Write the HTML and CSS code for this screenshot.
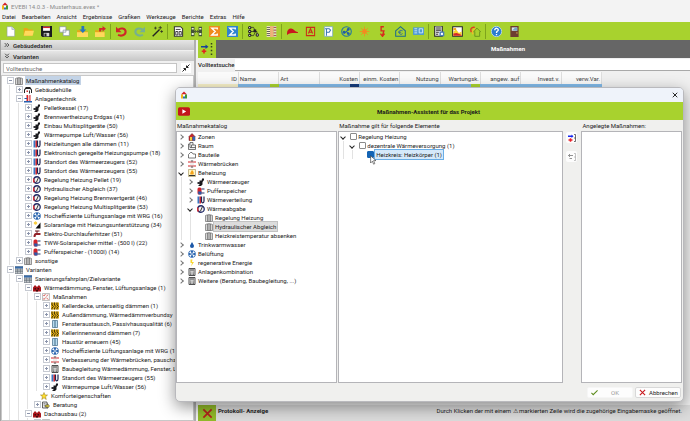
FILE: index.html
```html
<!DOCTYPE html>
<html lang="de">
<head>
<meta charset="utf-8">
<title>EVEBI 14.0.3 - Musterhaus.evex *</title>
<link rel="stylesheet" href="styles.css">
</head>
<body>
<svg class="defs" aria-hidden="true">
  <symbol id="logo" viewBox="0 0 16 16"><path d="M2 7 8 1l6 6z" fill="#d3202a"/><path d="M2 7h4v8H2z" fill="#f2b718"/><path d="M10 7h4v8h-4z" fill="#3f9b35"/><path d="M6 7h4v4H6z" fill="#fff"/><path d="M6 11h4v4H6z" fill="#2a6db5"/></symbol>
  <symbol id="new" viewBox="0 0 16 16"><path d="M3 1h7l4 4v10H3z" fill="#fff" stroke="#8f9bb0" stroke-width=".8"/><path d="M10 1v4h4" fill="#d9e0ea" stroke="#8f9bb0" stroke-width=".8"/></symbol>
  <symbol id="folder" viewBox="0 0 16 16"><path d="M1 3h5l2 2h6v9H1z" fill="#e6a817"/><path d="M3 7h13l-2 7H1z" fill="#ffd95c"/></symbol>
  <symbol id="save" viewBox="0 0 16 16"><path d="M0 0h16v16H2l-2-2z" fill="#1b1b1f"/><path d="M3 1h10v6H3z" fill="#fff"/><path d="M3 1h10v2H3z" fill="#d2232a"/><path d="M4 10h8v5H4z" fill="#d5d5d5"/><path d="M5 11h3v4H5z" fill="#222"/></symbol>
  <symbol id="copy" viewBox="0 0 16 16"><path d="M1 1h9v8H1zM6 6h9v8H6z" fill="#fff" stroke="#8390a5"/></symbol>
  <symbol id="import" viewBox="0 0 16 16"><path d="M0 6h5l2 2h9v8H0z" fill="#e6a817"/><path d="M0 9h16v7H0z" fill="#ffd95c"/><path d="M6.500 0h4v5h3l-5 5-5-5h3z" fill="#2876bd"/></symbol>
  <symbol id="export" viewBox="0 0 16 16"><path d="M0 6h5l2 2h7v8H0z" fill="#e6a817"/><path d="M0 9h14v7H0z" fill="#ffd95c"/><path d="M6 8V3h5V0l5 4-5 4V5.500H9V8z" fill="#d3262b"/></symbol>
  <symbol id="undo" viewBox="0 0 16 16"><path d="M3 6c3-4 11-3 11 2.500S7 15 3 13" fill="none" stroke="#cf2528" stroke-width="3"/><path d="M0 1v8h8z" fill="#cf2528"/></symbol>
  <symbol id="redo" viewBox="0 0 16 16"><path d="M13 6C10 2 2 3 2 8.500S9 15 13 13" fill="none" stroke="#76b092" stroke-width="3"/><path d="M16 1v8H8z" fill="#76b092"/></symbol>
  <symbol id="wand" viewBox="0 0 16 16"><path d="m1 15 10-10" stroke="#222" stroke-width="2"/><path d="M12 0v5M9.500 2.500h5M14 6v4M12 8h4M5 1v4M3 3h4" stroke="#222"/></symbol>
  <symbol id="report" viewBox="0 0 16 16"><path d="M2 1h9l3 3v11H2z" fill="#fff" stroke="#333" stroke-width="1.500"/><path d="M4 5h7M4 8h3v5H4zM9 8h3v5H9z" fill="none" stroke="#333" stroke-width="1.300"/></symbol>
  <symbol id="compare" viewBox="0 0 16 16"><path d="M0 1h5v14H0zM11 1h5v14h-5z" fill="#445339"/><path d="M1 3h3v2H1zM12 3h3v2h-3zM1 10h3v3H1zM12 10h3v3h-3z" fill="#e8f0d0"/><path d="M5 8h6M9 6l2 2-2 2M7 6 5 8l2 2" stroke="#333" fill="none"/></symbol>
  <symbol id="sumo" viewBox="0 0 16 16"><path d="M0 0h16v16H0z" fill="#f08a1c"/><path d="M12 5V3H4l5 5-5 5h8v-2" fill="none" stroke="#fff" stroke-width="2"/></symbol>
  <symbol id="sumb" viewBox="0 0 16 16"><path d="M0 0h16v16H0z" fill="#2f83cf"/><path d="M12 5V3H4l5 5-5 5h8v-2" fill="none" stroke="#fff" stroke-width="2"/></symbol>
  <symbol id="flow" viewBox="0 0 16 16"><path d="M3 2h5l3 6-3 6H3M3 8h10v5" fill="none" stroke="#222"/><g fill="#fff" stroke="#222" stroke-width="1.600"><circle cx="2.500" cy="2.500" r="1.700"/><circle cx="2.500" cy="8" r="1.700"/><circle cx="2.500" cy="13.500" r="1.700"/><circle cx="13.500" cy="13" r="1.700"/></g><path d="M8 5h4v4H8z" fill="#222"/></symbol>
  <symbol id="layers" viewBox="0 0 16 16"><path d="M1 0h5v16H1z" fill="#fff2c8"/><path d="M1 2h5M1 5h5M1 8h5M1 11h5M1 14h5" stroke="#4c4c4c" stroke-width="1.300"/><path d="M6 0h5v16H6z" fill="#efb07a"/><path d="M11 0h4v16h-4z" fill="#dbe0c5"/><path d="M11 2h4M11 6h4M11 10h4M11 14h4" stroke="#a33" stroke-width="1.300"/></symbol>
  <symbol id="cap" viewBox="0 0 16 16"><path d="M0 11C0 5 4 3 7 4c4 1 4 4 9 5v1c-5 1-11-1-16 3z" fill="#c9171e"/></symbol>
  <symbol id="boxa" viewBox="0 0 16 16"><path d="M2 2h12v12H2z" fill="#a8d22e" stroke="#cc2c18" stroke-width="1.500"/><path d="m5 11 3-7 3 7M6 9h4" fill="none" stroke="#cc2c18" stroke-width="1.600"/></symbol>
  <symbol id="boxp" viewBox="0 0 16 16"><path d="M2 1h12v14H2z" fill="#fff" stroke="#6fa2cd"/><path d="M5 14V4h4l2 2-2 3H5M3 4h4" fill="none" stroke="#3976b4" stroke-width="1.500"/></symbol>
  <symbol id="fan" viewBox="0 0 16 16"><circle cx="8" cy="8" r="7.500" fill="#2a66b0"/><path d="M8 8 2 5l3-3zM8 8l3-6 3 3zM8 8l6 3-3 3zM8 8l-3 6-3-3z" fill="#fff"/></symbol>
  <symbol id="fang" viewBox="0 0 16 16"><circle cx="8" cy="8" r="7" fill="none" stroke="#2676a0" stroke-width="1.600"/><path d="m8 8-4 3m4-3 3-4m-3 4 4 4" stroke="#205ea8" stroke-width="1.500"/><circle cx="4.500" cy="9" r="2" fill="#205ea8"/><circle cx="10.500" cy="5" r="2" fill="#205ea8"/><circle cx="10.500" cy="11" r="2" fill="#205ea8"/></symbol>
  <symbol id="sun" viewBox="0 0 16 16"><circle cx="8" cy="8" r="3.500" fill="#f48b20"/><path d="M8 1v14M1 8h14M3 3l10 10M13 3 3 13" stroke="#f48b20" stroke-width="1.200"/></symbol>
  <symbol id="flash" viewBox="0 0 16 16"><path d="M10 1H6v6h4l-2 7M5 11l3 4 3-4" fill="none" stroke="#d82a1e" stroke-width="2"/></symbol>
  <symbol id="housee" viewBox="0 0 16 16"><path d="M1 7 8 1l7 6v8H1z" fill="none" stroke="#1e6b8c" stroke-width="1.500"/><path d="M11 7c-4-2-6 1-5 3s3 3 5 1M5 9h4" fill="none" stroke="#205ea8" stroke-width="1.300"/></symbol>
  <symbol id="card" viewBox="0 0 16 16"><path d="M0 2h16v11H0z" fill="#4f9bd2"/><path d="M2 4h4M2 7h4M2 10h4M9 4h5v6H9z" stroke="#d7ecfa" stroke-width="1.300" fill="none"/></symbol>
  <symbol id="calcs" viewBox="0 0 16 16"><path d="M1 0h11v15H1z" fill="#e7e7e7" stroke="#222" stroke-width="1.500"/><path d="M3 3h7M3 6h7M3 9h4M3 12h3" stroke="#333" stroke-width="1.500"/><path d="M8 8h7v7H8z" fill="#4b7fba"/><path d="M10 10h3v3h-3z" fill="#fff"/></symbol>
  <symbol id="chart" viewBox="0 0 16 16"><path d="M1 1h14v14H1z" fill="#fff" stroke="#222" stroke-width="1.500"/><path d="M2 3h4v3H2z" fill="#f5a51b"/><path d="M2 14V8l4-3 4 5 4-2v6z" fill="#f8d22d"/><path d="M2 14v-3l5-1 7 3v1z" fill="#d3262b"/></symbol>
  <symbol id="houses" viewBox="0 0 16 16"><path d="M7 2C2 1 0 5 2 9" fill="none" stroke="#df3b20" stroke-width="2"/><path d="M8 4C4 4 3 8 4 12" fill="none" stroke="#f3ba28" stroke-width="2"/><path d="M5 9l5-6 6 6M7 8v7h7V8" fill="none" stroke="#61891c" stroke-width="1.200"/></symbol>
  <symbol id="help" viewBox="0 0 16 16"><circle cx="8" cy="8" r="7.500" fill="#2b7cd0" stroke="#d7e9fa"/><path d="M5.500 6c0-4 5.500-3 5 0-.3 1.500-2.500 1.500-2.500 4M8 11.500v2" fill="none" stroke="#fff" stroke-width="2"/></symbol>
  <symbol id="door" viewBox="0 0 16 16"><path d="M2 0h12v16H2z" fill="#6d3d31"/><path d="M4 2h8v5H4z" fill="#d8e6ef"/><path d="m5 6 4-4h3v5z" fill="#78a7c6"/><circle cx="11.500" cy="10" r="1" fill="#e2bf58"/></symbol>
  <symbol id="assign" viewBox="0 0 16 16"><path d="M0 4h6V2l4 3-4 3V6H0z" fill="#17419b"/><path d="M7 11H1M4 8v6" stroke="#e1261c" stroke-width="2.200"/><path d="M13 0h2v2h-2zM13 4h2v2h-2zM13 9h2v2h-2zM13 14h2v2h-2z" fill="#33441c"/></symbol>
  <symbol id="assignc" viewBox="0 0 16 16"><path d="M0 3h7V1l4 3.500-4 3.500V6H0z" fill="#1628ef"/><path d="M9 12H1M5 8.500v7" stroke="#ea2028" stroke-width="3"/><path d="M12 1h3v14h-3M12 8h3" fill="none" stroke="#333" stroke-width="1.400"/></symbol>
  <symbol id="assignd" viewBox="0 0 16 16"><path d="M1 5h9M4 2 1 5l3 3M3 11h5" fill="none" stroke="#777" stroke-width="1.600"/><path d="M12 1h3v14h-3M12 8h3" fill="none" stroke="#888"/></symbol>
  <symbol id="cat" viewBox="0 0 16 16"><path d="M1 3c2-2 12-2 14 0v12H1z" fill="#d7d7d7" stroke="#3f3f3f"/><path d="M5 2v13M8 1v15M11 2v13" stroke="#555" stroke-width="1.200"/></symbol>
  <symbol id="shell" viewBox="0 0 16 16"><path d="M1 14V8l3-5h8l3 5v6" fill="#fff" stroke="#222" stroke-width="2"/><path d="M0 8 4 2h8l4 6-4-2H4z" fill="#222"/><path d="M5 9h3v3H5z" fill="#c82c2c"/><path d="M10 9h2v6h-2z" fill="#333"/></symbol>
  <symbol id="tech" viewBox="0 0 16 16"><path d="M8 1h4v11H8z" fill="#f0c8c8"/><path d="M5 0h3v12H5z" fill="#d9262c"/><path d="M11 0h2v12h-2z" fill="#d9262c"/><path d="M0 12h16v3H0z" fill="#275fae"/><path d="M1 7h5" stroke="#275fae" stroke-width="2"/></symbol>
  <symbol id="boiler" viewBox="0 0 16 16"><path d="M5 5h6v8l-3 3H2l3-3zM10 1h4v3l-3 4H9z" fill="#18181c"/><path d="M1 8h5v4H1z" fill="#303036"/></symbol>
  <symbol id="pipe" viewBox="0 0 16 16"><path d="M1 1h4v14H1z" fill="#3a78c4"/><path d="M5 1h3v14H5z" fill="#d6262d"/><path d="M9 1v9c0 5 5 5 5 0V1" fill="none" stroke="#1f2450" stroke-width="2.400"/></symbol>
  <symbol id="ctrl" viewBox="0 0 16 16"><circle cx="8" cy="8" r="6.500" fill="#f4f4f4" stroke="#232b68" stroke-width="2.600"/><path d="M3 13a7 7 0 0 1-1-8" fill="none" stroke="#d62c35" stroke-width="3"/><path d="M11 3 7 12" stroke="#333" stroke-width="2"/></symbol>
  <symbol id="solar" viewBox="0 0 16 16"><path d="M15 3v12H5z" fill="#101010"/><circle cx="5" cy="4" r="3" fill="#f8c722"/><path d="M5 0v8M1 4h8" stroke="#f8d45a"/></symbol>
  <symbol id="tap" viewBox="0 0 16 16"><path d="M4 2h9M8 2v4" stroke="#6d171d" stroke-width="2"/><path d="M15 6H6c-3 0-5 3-5 8h4c0-3 1-4 3-4h7z" fill="#932128"/></symbol>
  <symbol id="tank" viewBox="0 0 16 16"><rect x="1" y="1" width="8" height="14" rx="3" fill="#d3232b"/><path d="M2 9h7v6H3z" fill="#2c58a9"/><path d="M9 4h6M9 12h6" stroke="#23346c" stroke-width="2"/></symbol>
  <symbol id="table" viewBox="0 0 16 16"><path d="M0 1h16v14H0z" fill="#bfc4c8" stroke="#4a5560"/><path d="M0 1h16v4H0z" fill="#356bab"/><path d="M0 8h16M0 11h16M5 5v10M11 5v10" stroke="#59636b"/></symbol>
  <symbol id="house" viewBox="0 0 16 16"><path d="M0 7 4 2l4 4 4-4 4 5v8H0z" fill="#a9151b"/><path d="M3 8h3v3H3zM9 8h3v3H9zM6 12h4v3H6z" fill="#3d0b0e"/></symbol>
  <symbol id="check" viewBox="0 0 16 16"><path d="M1 1h14v14H1z" fill="#f6f6f6" stroke="#888"/><path d="m3 4 1 2 3-4M3 11l1 2 3-4M9 10l4 3M12 3 9 7" fill="none" stroke="#d64640" stroke-width="1.500"/></symbol>
  <symbol id="insul" viewBox="0 0 16 16"><path d="M0 1h16v14H0z" fill="#d8a716"/><path d="M2 1v5l3 3-3 3v3M7 1v5l3 3-3 3v3M12 1v5l3 3-3 3v3" fill="none" stroke="#47390a" stroke-width="2"/></symbol>
  <symbol id="window" viewBox="0 0 16 16"><path d="M3 1h10v14H3z" fill="#b8dcf0" stroke="#416a87" stroke-width="1.400"/><path d="M8 1v14" stroke="#416a87" stroke-width="2"/></symbol>
  <symbol id="bridge" viewBox="0 0 16 16"><path d="M0 4h16M0 12h16" stroke="#d3262b" stroke-width="2.200"/><path d="M6 0v16M10 0v16" stroke="#bdbdbd"/><path d="m6 1 2 3 2-3M6 15l2-3 2 3" fill="#333"/></symbol>
  <symbol id="calc" viewBox="0 0 16 16"><path d="M2 1h12v14H2z" fill="#eee" stroke="#333" stroke-width="1.700"/><path d="M4 4h8" stroke="#333" stroke-width="2"/><path d="M4 8h2M7 8h2M10 8h2M4 10.500h2M7 10.500h2M10 10.500h2M4 13h2M7 13h2M10 13h2" stroke="#444" stroke-width="1.400"/></symbol>
  <symbol id="star" viewBox="0 0 16 16"><path d="m8 1 2 5h5l-4 3.500L12.500 15 8 11.500 3.500 15 5 9.500 1 6h5z" fill="#ffdf2e" stroke="#8f7310"/></symbol>
  <symbol id="advice" viewBox="0 0 16 16"><path d="M1 2h9v12H1z" fill="#eee" stroke="#333" stroke-width="1.500"/><path d="M3 5h4M3 8h3" stroke="#444"/><path d="M6 8h5V5l4 5-4 5v-3H6z" fill="#d4c23b" stroke="#333"/></symbol>
  <symbol id="zone" viewBox="0 0 16 16"><path d="M2 7 8 1l6 6v8H2z" fill="#ca262a" stroke="#552021"/><path d="M4 8h4v7H4z" fill="#f3cd37"/><path d="M9 7h5v8H9z" fill="#2f69b4"/></symbol>
  <symbol id="room" viewBox="0 0 16 16"><path d="M1 4h3V1h6v5h5v9H1zM4 4v7h11M10 6H7v5" fill="#eee" stroke="#444" stroke-width="1.400"/></symbol>
  <symbol id="part" viewBox="0 0 16 16"><path d="M1 7 5 3h3l2 3h5v8H1z" fill="#fff" stroke="#444" stroke-width="1.400"/></symbol>
  <symbol id="heat" viewBox="0 0 16 16"><path d="M1 1h14v14H1z" fill="#fff6c9" stroke="#8a7b3c"/><path d="M8 2c4 4 4 6 3 9H5c-2-3 1-5 3-9z" fill="#f6a51c"/><path d="M2 12h12v2H2z" fill="#333"/></symbol>
  <symbol id="drop" viewBox="0 0 16 16"><path d="M8 2c2 4 4 6 4 8a4 4 0 0 1-8 0c0-2 2-4 4-8z" fill="#1c58a8"/></symbol>
  <symbol id="bolt" viewBox="0 0 16 16"><path d="M9 1H5v7h3l-2 7 6-9H8z" fill="#f8d72f"/></symbol>
  <symbol id="x" viewBox="0 0 16 16"><path d="m2 2 12 12M14 2 2 14" stroke="currentColor" stroke-width="2.500"/></symbol>
  <symbol id="tick" viewBox="0 0 16 16"><path d="m1 9 4 4L15 3" fill="none" stroke="#5c8c1c" stroke-width="2.400"/></symbol>
  <symbol id="chevd" viewBox="0 0 16 16"><path d="m3 2 5 5 5-5M3 8l5 5 5-5" fill="none" stroke="#222" stroke-width="2"/></symbol>
  <symbol id="chevr" viewBox="0 0 16 16"><path d="m2 3 5 5-5 5M8 3l5 5-5 5" fill="none" stroke="#222" stroke-width="2"/></symbol>
  <symbol id="shrink" viewBox="0 0 16 16"><path d="m1 15 6-6M3 9h4v4M15 1 9 7M13 7H9V3" fill="none" stroke="#222" stroke-width="2"/></symbol>
  <symbol id="play" viewBox="0 0 22 16"><rect width="22" height="16" rx="3" fill="#c3161c"/><path d="m8 4 7 4-7 4z" fill="#fff"/></symbol>
  <symbol id="pointer" viewBox="0 0 10 16"><path d="M1 1v12l3-3 2 5 2-1-2-5h4z" fill="#fff" stroke="#333"/></symbol>
</svg>

<div class="app">
  <header class="titlebar"><svg class="i8"><use href="#logo"/></svg><h1>EVEBI 14.0.3 - Musterhaus.evex *</h1></header>
  <nav class="menu">
    <button>Datei</button><button>Bearbeiten</button><button>Ansicht</button><button>Ergebnisse</button><button>Grafiken</button><button>Werkzeuge</button><button>Berichte</button><button>Extras</button><button>Hilfe</button>
  </nav>
  <div class="toolbar">
    <button aria-label="Neu"><svg><use href="#new"/></svg></button><button aria-label="Öffnen"><svg><use href="#folder"/></svg></button><button aria-label="Speichern"><svg><use href="#save"/></svg></button><button aria-label="Kopieren"><svg><use href="#copy"/></svg></button><button aria-label="Importieren"><svg><use href="#import"/></svg></button><button aria-label="Exportieren"><svg><use href="#export"/></svg></button><i></i>
    <button aria-label="Rückgängig"><svg><use href="#undo"/></svg></button><button aria-label="Wiederholen"><svg><use href="#redo"/></svg></button><button aria-label="Assistent"><svg><use href="#wand"/></svg></button><i></i>
    <button aria-label="Bericht"><svg><use href="#report"/></svg></button><button aria-label="Vergleich"><svg><use href="#compare"/></svg></button><button aria-label="Summe"><svg><use href="#sumo"/></svg></button><button aria-label="Summe Varianten"><svg><use href="#sumb"/></svg></button><i></i>
    <button aria-label="Struktur"><svg><use href="#flow"/></svg></button><button aria-label="Schichten"><svg><use href="#layers"/></svg></button><i></i>
    <button aria-label="Kappe"><svg><use href="#cap"/></svg></button><button aria-label="Ausweis"><svg><use href="#boxa"/></svg></button><button aria-label="Plan"><svg><use href="#boxp"/></svg></button><button aria-label="Lüftung"><svg><use href="#fang"/></svg></button><button aria-label="Solar"><svg><use href="#sun"/></svg></button><button aria-label="Strom"><svg><use href="#flash"/></svg></button><button aria-label="Gebäude"><svg><use href="#housee"/></svg></button><button aria-label="Karte"><svg><use href="#card"/></svg></button><i></i>
    <button aria-label="Rechner"><svg><use href="#calcs"/></svg></button><button aria-label="Diagramm"><svg><use href="#chart"/></svg></button><button aria-label="Häuser"><svg><use href="#houses"/></svg></button><i></i>
    <button aria-label="Hilfe"><svg><use href="#help"/></svg></button><button aria-label="Beenden"><svg><use href="#door"/></svg></button>
  </div>

  <div class="body">
    <aside class="side">
      <button class="bar"><svg><use href="#chevr"/></svg>Gebäudedaten</button>
      <button class="bar"><svg><use href="#chevd"/></svg>Varianten</button>
      <div class="find"><input type="text" placeholder="Volltextsuche" aria-label="Volltextsuche"><button aria-label="Einklappen"><svg><use href="#shrink"/></svg></button></div>
      <div class="tree boxes">
        <details open><summary><svg><use href="#cat"/></svg><span class="sel">Maßnahmenkatalog</span></summary><div>
          <details><summary><svg><use href="#shell"/></svg>Gebäudehülle</summary></details>
          <details open><summary><svg><use href="#tech"/></svg>Anlagentechnik</summary><div>
            <details><summary><svg><use href="#boiler"/></svg>Pelletkessel (17)</summary></details>
            <details><summary><svg><use href="#boiler"/></svg>Brennwertheizung Erdgas (41)</summary></details>
            <details><summary><svg><use href="#boiler"/></svg>Einbau Multisplitgeräte (50)</summary></details>
            <details><summary><svg><use href="#boiler"/></svg>Wärmepumpe Luft/Wasser (56)</summary></details>
            <details><summary><svg><use href="#pipe"/></svg>Heizleitungen alle dämmen (11)</summary></details>
            <details><summary><svg><use href="#pipe"/></svg>Elektronisch geregelte Heizungspumpe (18)</summary></details>
            <details><summary><svg><use href="#pipe"/></svg>Standort des Wärmeerzeugers (52)</summary></details>
            <details><summary><svg><use href="#pipe"/></svg>Standort des Wärmeerzeugers (55)</summary></details>
            <details><summary><svg><use href="#ctrl"/></svg>Regelung Heizung Pellet (19)</summary></details>
            <details><summary><svg><use href="#ctrl"/></svg>Hydraulischer Abgleich (37)</summary></details>
            <details><summary><svg><use href="#ctrl"/></svg>Regelung Heizung Brennwertgerät (46)</summary></details>
            <details><summary><svg><use href="#ctrl"/></svg>Regelung Heizung Multisplitgeräte (53)</summary></details>
            <details><summary><svg><use href="#fan"/></svg>Hocheffiziente Lüftungsanlage mit WRG (16)</summary></details>
            <details><summary><svg><use href="#solar"/></svg>Solaranlage mit Heizungsunterstützung (34)</summary></details>
            <details><summary><svg><use href="#tap"/></svg>Elektro-Durchlauferhitzer (51)</summary></details>
            <details><summary><svg><use href="#tank"/></svg>TWW-Solarspeicher mittel - (500 l) (22)</summary></details>
            <details><summary><svg><use href="#tank"/></svg>Pufferspeicher - (1000l) (14)</summary></details>
          </div></details>
          <details><summary><svg><use href="#cat"/></svg>sonstige</summary></details>
        </div></details>
        <details open><summary><svg><use href="#table"/></svg>Varianten</summary><div>
          <details open><summary><svg><use href="#table"/></svg>Sanierungsfahrplan/Zielvariante</summary><div>
            <details open><summary><svg><use href="#house"/></svg>Wärmedämmung, Fenster, Lüftungsanlage (1)</summary><div>
              <details open><summary><svg><use href="#check"/></svg>Maßnahmen</summary><div>
                <details><summary><svg><use href="#insul"/></svg>Kellerdecke, unterseitig dämmen (1)</summary></details>
                <details><summary><svg><use href="#insul"/></svg>Außendämmung, Wärmedämmverbundsy</summary></details>
                <details><summary><svg><use href="#window"/></svg>Fensteraustausch, Passivhausqualität (6)</summary></details>
                <details><summary><svg><use href="#insul"/></svg>Kellerinnenwand dämmen (7)</summary></details>
                <details><summary><svg><use href="#window"/></svg>Haustür erneuern (45)</summary></details>
                <details><summary><svg><use href="#fan"/></svg>Hocheffiziente Lüftungsanlage mit WRG (16)</summary></details>
                <details><summary><svg><use href="#bridge"/></svg>Verbesserung der Wärmebrücken, pauschal</summary></details>
                <details><summary><svg><use href="#calc"/></svg>Baubegleitung Wärmedämmung, Fenster, L</summary></details>
                <details><summary><svg><use href="#pipe"/></svg>Standort des Wärmeerzeugers (55)</summary></details>
                <details><summary><svg><use href="#boiler"/></svg>Wärmepumpe Luft/Wasser (56)</summary></details>
              </div></details>
              <p><svg><use href="#star"/></svg>Komforteigenschaften</p>
              <details><summary><svg><use href="#advice"/></svg>Beratung</summary></details>
            </div></details>
            <details open><summary><svg><use href="#house"/></svg>Dachausbau (2)</summary><div>
              <details open><summary><svg><use href="#check"/></svg>Maßnahmen</summary></details>
            </div></details>
          </div></details>
        </div></details>
      </div>
    </aside>

    <main class="main">
      <div class="head"><button aria-label="Zuordnen"><svg><use href="#assign"/></svg></button><h2>Maßnahmen</h2></div>
      <div class="search"><label for="q">Volltextsuche</label><input id="q" type="text"></div>
      <table>
        <thead><tr><th class="r">ID</th><th>Name</th><th>Art</th><th class="r">Kosten</th><th class="r">einm. Kosten</th><th class="r">Nutzung</th><th class="r">Wartungsk.</th><th class="r">angew. auf</th><th class="r">Invest.v.</th><th class="r">verw.Var.</th></tr></thead>
        <tbody><tr><td></td><td class="mark"></td><td></td><td class="mark dark"></td><td></td><td></td><td class="mark"></td><td></td><td></td><td></td></tr></tbody>
      </table>
      <footer class="log"><button aria-label="Protokoll schließen"><svg><use href="#x"/></svg></button><h2>Protokoll- Anzeige</h2><p>Durch Klicken der mit einem ⚠ markierten Zeile wird die zugehörige Eingabemaske geöffnet.</p></footer>
    </main>
  </div>

  <section class="dialog" role="dialog" aria-label="Maßnahmen-Assistent">
    <div class="dtitle"><svg class="i8"><use href="#logo"/></svg><button aria-label="Schließen"><svg><use href="#x"/></svg></button></div>
    <div class="dhead"><button aria-label="Video"><svg><use href="#play"/></svg></button><h2>Maßnahmen-Assistent für das Projekt</h2></div>
    <div class="panes">
      <div class="pane cat"><h3>Maßnahmekatalog</h3>
        <div class="well tree chev">
          <details><summary><svg><use href="#zone"/></svg>Zonen</summary></details>
          <details><summary><svg><use href="#room"/></svg>Raum</summary></details>
          <details><summary><svg><use href="#part"/></svg>Bauteile</summary></details>
          <details><summary><svg><use href="#bridge"/></svg>Wärmebrücken</summary></details>
          <details open><summary><svg><use href="#heat"/></svg>Beheizung</summary><div>
            <details><summary><svg><use href="#boiler"/></svg>Wärmeerzeuger</summary></details>
            <details><summary><svg><use href="#tank"/></svg>Pufferspeicher</summary></details>
            <details><summary><svg><use href="#pipe"/></svg>Wärmeverteilung</summary></details>
            <details open><summary><svg><use href="#ctrl"/></svg>Wärmeabgabe</summary><div>
              <p><svg><use href="#cat"/></svg>Regelung Heizung</p>
              <p><svg><use href="#cat"/></svg><span class="sel">Hydraulischer Abgleich</span></p>
              <p><svg><use href="#cat"/></svg>Heizkreistemperatur absenken</p>
            </div></details>
          </div></details>
          <details><summary><svg><use href="#drop"/></svg>Trinkwarmwasser</summary></details>
          <details><summary><svg><use href="#fan"/></svg>Belüftung</summary></details>
          <details><summary><svg><use href="#bolt"/></svg>regenerative Energie</summary></details>
          <details><summary><svg><use href="#calc"/></svg>Anlagenkombination</summary></details>
          <details><summary><svg><use href="#calc"/></svg>Weitere (Beratung, Baubegleitung, ...)</summary></details>
        </div>
      </div>
      <div class="pane elems"><h3>Maßnahme gilt für folgende Elemente</h3>
        <div class="well tree chev">
          <details open><summary><input type="checkbox" id="c1"><label for="c1">Regelung Heizung</label></summary><div>
            <details open><summary><input type="checkbox" id="c2"><label for="c2">dezentrale Wärmeversorgung (1)</label></summary><div>
              <p><span class="hit"><input type="checkbox" id="c3" checked><svg class="pointer"><use href="#pointer"/></svg></span><label for="c3" class="sel">Heizkreis: Heizkörper (1)</label></p>
            </div></details>
          </div></details>
        </div>
      </div>
      <div class="moves"><button aria-label="Hinzufügen"><svg><use href="#assignc"/></svg></button><button aria-label="Entfernen" disabled><svg><use href="#assignd"/></svg></button></div>
      <div class="pane made"><h3>Angelegte Maßnahmen:</h3><div class="well"></div></div>
    </div>
    <div class="actions"><button disabled><svg><use href="#tick"/></svg><span>OK</span></button><button class="cancel"><svg><use href="#x"/></svg><span>Abbrechen</span></button></div>
  </section>
</div>
</body>
</html>
```
FILE: styles.css
```css
:root {
  --green: #a8d22e;
  --line: #b4b4b8;
}
* { box-sizing: border-box; }
body {
  margin: 0;
  font: 6px/9px Roboto, "Open Sans", sans-serif;
  color: #1c1c1c;
  background: #f0f0f0;
}
h1, h2, h3, p { margin: 0; font: inherit; }
button, input { font: inherit; color: inherit; margin: 0; }
button { padding: 0; border: 0; background: none; }
svg { display: block; flex: none; }
.defs { display: none; }

.app {
  position: relative;
  display: flex;
  flex-direction: column;
  height: 100vh;
  overflow: hidden;
  white-space: nowrap;
}
.i8 { width: 8px; height: 8px; }
.titlebar {
  display: flex;
  align-items: center;
  gap: 2px;
  height: 11px;
  padding: 1px 1px 0;
  background: #f3f3f3;
  color: #8b8b8b;
}
.menu {
  display: flex;
  gap: 6px;
  height: 11px;
  padding: 0 2px;
  background: #f3f3f3;
}

.toolbar {
  display: flex;
  align-items: center;
  height: 18px;
  flex: none;
  padding-left: 1px;
  background: var(--green);
}
.toolbar button { width: 18px; display: grid; place-items: center; }
.toolbar svg { width: 11px; height: 11px; }
.toolbar i { width: 3px; height: 15px; background: linear-gradient(90deg, transparent 1px, #7fa41c 1px 2px, transparent 2px); }

.body { display: grid; grid-template-columns: 196px 1fr; flex: 1; min-height: 0; }
.side {
  display: flex;
  flex-direction: column;
  min-height: 0;
  overflow: hidden;
  border-left: 1px solid #a4a4a4;
  border-right: 2px solid #b0b0b0;
}
.bar {
  display: flex;
  align-items: center;
  gap: 3px;
  height: 10px;
  flex: none;
  margin-bottom: 1px;
  padding-left: 3px;
  background: linear-gradient(#e6e6e6, #c6c6c6);
  font-weight: 500;
}
.bar svg { width: 6px; height: 6px; }
.find { display: flex; align-items: center; gap: 4px; padding: 1px 3px 2px 2px; }
.find input {
  flex: 1;
  min-width: 0;
  height: 10px;
  padding: 0 2px;
  border: 1px solid #c4c4c4;
  background: #fff;
}
.find input::placeholder { color: #666; opacity: 1; }
.find button { display: grid; place-items: center; width: 10px; height: 10px; background: #fff; }
.find svg { width: 8px; height: 8px; }

.tree { flex: 1; overflow: hidden; background: #fff; }
.tree summary, .tree p {
  display: flex;
  align-items: center;
  height: 9px;
  list-style: none;
}
.tree summary > svg, .tree p > svg { width: 8px; height: 8px; margin-right: 3px; }
.tree summary::before { content: ""; flex: none; width: 5px; height: 5px; margin-right: 1px; }
.tree details > div { margin-left: 2px; padding-left: 6px; border-left: 1px solid #e2e2e2; }
.boxes { padding: 0 0 0 5px; border: 1px solid #c8c8c8; }
.boxes summary::before {
  border: 1px solid #c6cad2;
  background: linear-gradient(#8b94ab, #8b94ab) center / 3px 1px no-repeat, linear-gradient(#8b94ab, #8b94ab) center / 1px 3px no-repeat, #fff;
}
.boxes details[open] > summary::before { background: linear-gradient(#8b94ab, #8b94ab) center / 3px 1px no-repeat, #fff; }
.boxes p { padding-left: 6px; }
.boxes .sel { margin-left: -1px; padding: 0 1px; background: #c3d3e6; }

.main { display: flex; flex-direction: column; min-width: 0; padding-left: 2px; }
.head { display: flex; height: 18px; background: #666; }
.head button { display: grid; place-items: center; width: 18px; background: var(--green); }
.head svg { width: 12px; height: 12px; }
.head h2 { flex: 1; padding-right: 18px; padding-left: 128px; line-height: 18px; text-align: center; font-weight: 700; color: #fff; }
.search { display: flex; align-items: center; height: 14px; padding-bottom: 1px; }
.search label { width: 37px; font-weight: 500; }
.search input { flex: 1; height: 12px; border: 0; border-bottom: 1px solid #a9a9a9; background: #fff; }

table { width: 404px; border-collapse: collapse; table-layout: fixed; }
th { height: 12px; padding: 0 1px; border-right: 1px solid #dedede; background: #fafafa; font-weight: 400; text-align: left; color: #444; }
th.r { text-align: right; }
td { height: 9px; padding: 0; background: #81b9e8; }
td:first-child { background: #f7f0c8; }
td.mark { background: linear-gradient(var(--green), var(--green)) right / 9px 100% no-repeat, #81b9e8; }
td.dark { background: linear-gradient(#173c7c, #173c7c) right / 9px 100% no-repeat, #81b9e8; }

.log { display: flex; align-items: flex-start; height: 16px; margin-top: auto; background: #dcdcdc; }
.log button { display: grid; place-items: center; width: 18px; height: 16px; margin-right: 2px; background: #93bb2a; color: #b3231c; }
.log svg { width: 11px; height: 11px; }
.log h2 { font-weight: 700; line-height: 12px; }
.log p { margin-left: auto; padding-right: 8px; line-height: 12px; }

.dialog {
  position: absolute;
  inset: 87px 6px 19px 175px;
  display: flex;
  flex-direction: column;
  border: 1px solid #b9b9bd;
  border-radius: 5px;
  background: #f0f0ee;
  box-shadow: 0 5px 16px rgba(0, 0, 0, .42);
  overflow: hidden;
}
.dtitle { display: flex; align-items: center; justify-content: space-between; height: 14px; padding: 0 5px 0 4px; background: #eff3fa; }
.dtitle button svg { width: 6px; height: 6px; }
.dhead { display: flex; align-items: center; height: 18px; padding: 0 16px 0 2px; background: var(--green); }
.dhead svg { width: 12px; height: 9px; }
.dhead h2 { flex: 1; text-align: center; font-weight: 700; }
.panes { flex: 1; display: flex; min-height: 0; }
.pane { display: flex; flex-direction: column; }
.pane h3 { height: 11px; padding-left: 1px; line-height: 11px; }
.well { flex: 1; border: 1px solid var(--line); background: #fff; }
.cat { flex: 162; margin-right: 1px; }
.elems { flex: 226; }
.made { flex: 101; padding-right: 1px; }
.moves { display: flex; flex-direction: column; gap: 8px; width: 18px; padding: 12px 3px 0; }
.moves button { display: grid; place-items: center; width: 11px; height: 11px; border-radius: 2px; background: #fdfdfd; }
.moves svg { width: 8px; height: 8px; }

.chev { padding: 0 0 0 2px; }
.chev summary::before {
  width: 3px;
  height: 3px;
  margin-right: 5px;
  border: solid #777;
  border-width: 1px 1px 0 0;
  transform: rotate(45deg);
}
.chev details[open] > summary::before { border-color: #222; transform: rotate(135deg); }
.chev summary > svg, .chev p > svg { margin-right: 2px; }
.chev p { padding-left: 8px; }
.chev .sel { margin-left: -1px; padding: 0 1px; background: #dcdcdc; outline: 1px solid #c2c2c2; }
.elems input {
  appearance: none;
  flex: none;
  display: block;
  width: 7px;
  height: 7px;
  border: 1px solid #8a8a8a;
  border-radius: 1px;
  background: #fff;
}
.elems input:checked { border-color: #1464b4; background: #1464b4; }
.elems label { padding-left: 1px; }
.elems .sel { margin-left: 1px; background: #d5e9fa; outline-color: #6aaee6; }
.hit { position: relative; }
.pointer { position: absolute; left: 3px; top: 4px; width: 6px; height: 10px; }

.actions { display: flex; justify-content: flex-end; gap: 2px; padding: 4px 2px 3px; }
.actions button {
  display: flex;
  align-items: center;
  gap: 3px;
  width: 46px;
  height: 11px;
  padding: 0 3px;
  border: 1px solid #d8d8d8;
  border-radius: 2px;
  background: #fdfdfd;
}
.actions span { flex: 1; text-align: center; }
.actions svg { width: 7px; height: 7px; }
.actions button:disabled { border-color: #f6f6f6; color: #999; }
.cancel svg { color: #c9191e; }
```
